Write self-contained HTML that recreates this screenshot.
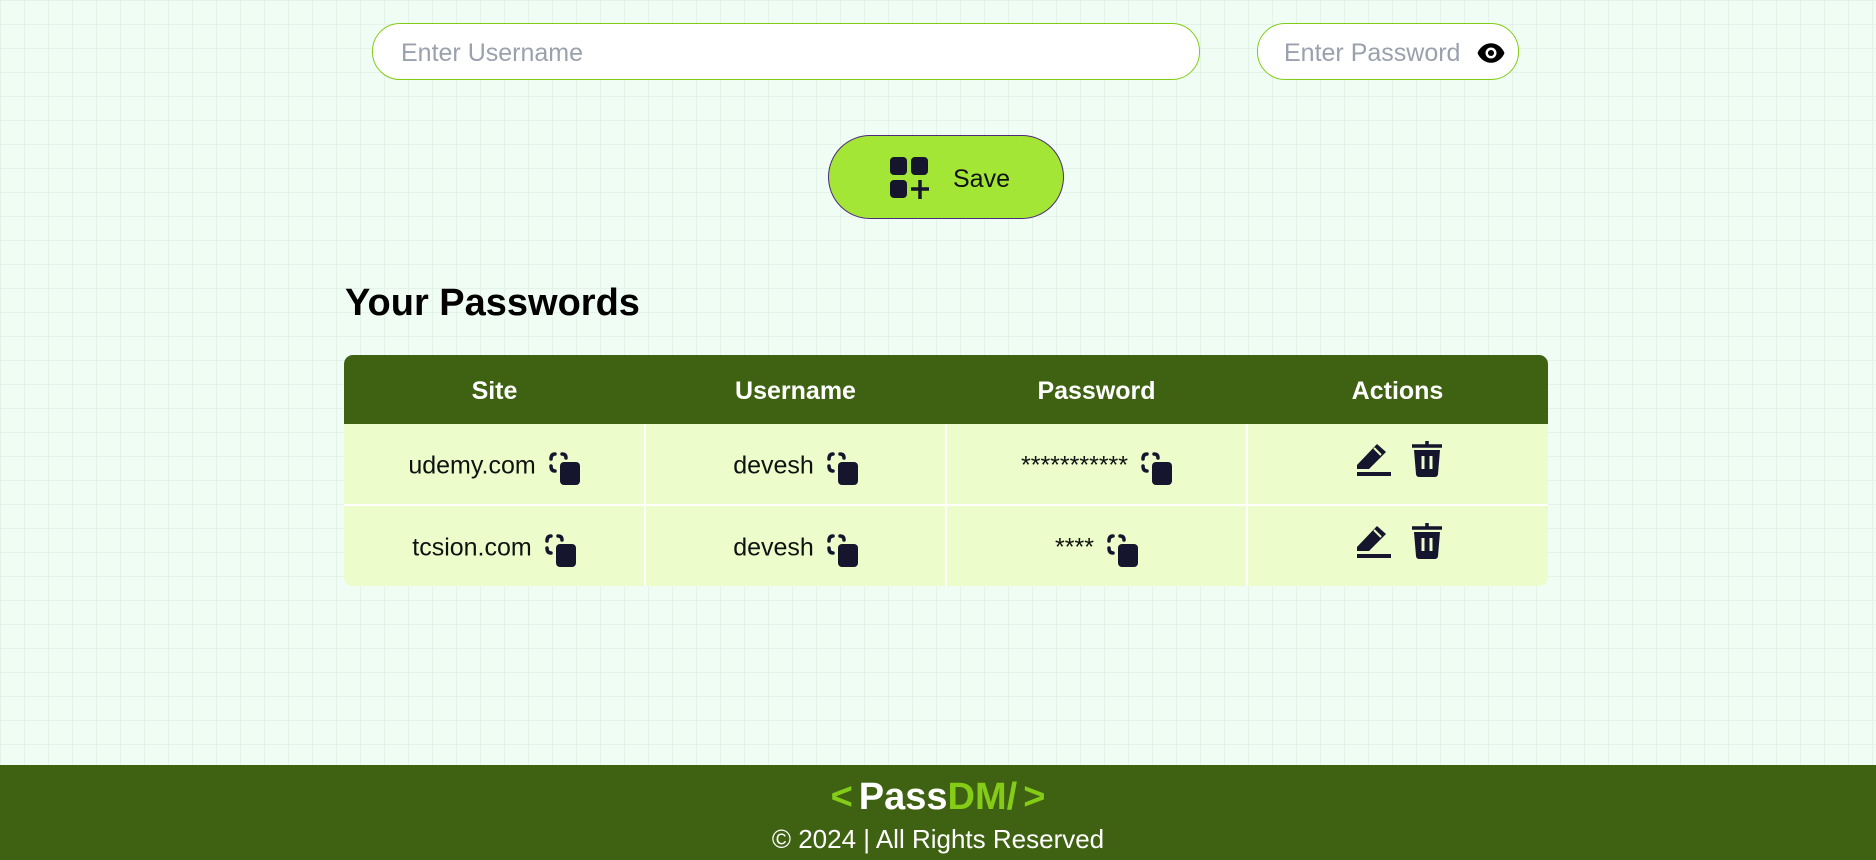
<!DOCTYPE html>
<html><head><meta charset="utf-8"><style>
*{box-sizing:border-box;margin:0;padding:0}
body{width:1876px;height:860px;overflow:hidden;position:relative;font-family:"Liberation Sans",sans-serif;
background-color:#effdf4;
background-image:linear-gradient(to right,#e3f3e8 1px,transparent 1px),linear-gradient(to bottom,#e3f3e8 1px,transparent 1px);
background-size:24px 24px}
.in{position:absolute;top:23px;height:57px;border:1px solid #84cc16;border-radius:28px;background:#fff;font-size:25px;color:#9aa1ad;padding-left:28px;line-height:59px}
.save{position:absolute;left:828px;top:135px;width:236px;height:84px;border:1px solid #4c2a7a;border-radius:42px;background:#a3e635;font-size:25px;color:#111}
h2{position:absolute;left:345px;top:282px;font-size:38px;font-weight:bold;color:#000}
table{position:absolute;left:344px;top:355px;width:1204px;border-collapse:collapse;border-radius:9px;overflow:hidden;font-size:25px}
th{background:#3f6212;color:#fff;height:69px;font-weight:bold;width:25%;padding-top:4px}
td{background:#ecfccb;height:81px;text-align:center;border:2px solid #fff;border-top:none;color:#111;padding-top:6px}
td:first-child{border-left:none}td:last-child{border-right:none}
tr:last-child td{border-bottom:none}
.cp{display:inline-block;vertical-align:middle;margin-left:12px;position:relative;top:1px}
footer{position:absolute;left:0;top:765px;width:1876px;height:95px;background:#3f6212;text-align:center;color:#fff}
</style></head><body>
<div class="in" style="left:372px;width:828px">Enter Username</div>
<div class="in" style="left:1257px;width:262px;padding-left:26px">Enter Password
<svg style="position:absolute;right:12px;top:18px" width="30" height="22" viewBox="0 0 24 18"><path d="M12 1C6 1 2 6 1 9c1 3 5 8 11 8s10-5 11-8C22 6 18 1 12 1z" fill="#000"/><circle cx="12" cy="9" r="4.5" fill="#fff"/><circle cx="12" cy="9" r="2.5" fill="#000"/></svg></div>
<div class="save">
<svg style="position:absolute;left:60px;top:20px" width="42" height="44" viewBox="0 0 42 44"><rect x="1" y="1" width="17" height="18" rx="4" fill="#15152e"/><rect x="22" y="1" width="17" height="18" rx="4" fill="#15152e"/><rect x="1" y="24" width="17" height="18" rx="4" fill="#15152e"/><path d="M31 24v19M22 33h18" stroke="#15152e" stroke-width="3.5"/></svg>
<span style="position:absolute;left:124px;top:29px">Save</span></div>
<h2>Your Passwords</h2>
<table><tr><th>Site</th><th>Username</th><th>Password</th><th>Actions</th></tr>
<tr><td>udemy.com<svg class="cp" width="32" height="34" viewBox="0 0 32 34"><g stroke="#15152e" stroke-width="3.5" fill="none" stroke-linecap="round"><path d="M3 8Q3 3 7 3M14 3Q18 3 18 7M3 15Q3 20 7 20"/></g><rect x="12" y="11" width="20" height="23" rx="4" fill="#15152e"/></svg></td>
<td>devesh<svg class="cp" width="32" height="34" viewBox="0 0 32 34"><g stroke="#15152e" stroke-width="3.5" fill="none" stroke-linecap="round"><path d="M3 8Q3 3 7 3M14 3Q18 3 18 7M3 15Q3 20 7 20"/></g><rect x="12" y="11" width="20" height="23" rx="4" fill="#15152e"/></svg></td>
<td>***********<svg class="cp" width="32" height="34" viewBox="0 0 32 34"><g stroke="#15152e" stroke-width="3.5" fill="none" stroke-linecap="round"><path d="M3 8Q3 3 7 3M14 3Q18 3 18 7M3 15Q3 20 7 20"/></g><rect x="12" y="11" width="20" height="23" rx="4" fill="#15152e"/></svg></td>
<td><svg width="40" height="34" viewBox="0 0 40 34" style="vertical-align:middle;margin-right:18px;position:relative;top:-8px"><path d="M24 2l9 8-17 17H4v-4z" fill="#15152e"/><path d="M21 6l7 7" stroke="#ecfccb" stroke-width="2"/><path d="M4 32h34" stroke="#15152e" stroke-width="4"/></svg><svg width="32" height="36" viewBox="0 0 32 36" style="vertical-align:middle;position:relative;top:-8px"><path d="M16 0v4M1 5h30" stroke="#15152e" stroke-width="3.5"/><path d="M3 9h26l-2 24a3 3 0 0 1-3 3H8a3 3 0 0 1-3-3z" fill="#15152e"/><path d="M12 15v13M20 15v13" stroke="#ecfccb" stroke-width="3"/></svg></td></tr>
<tr><td>tcsion.com<svg class="cp" width="32" height="34" viewBox="0 0 32 34"><g stroke="#15152e" stroke-width="3.5" fill="none" stroke-linecap="round"><path d="M3 8Q3 3 7 3M14 3Q18 3 18 7M3 15Q3 20 7 20"/></g><rect x="12" y="11" width="20" height="23" rx="4" fill="#15152e"/></svg></td>
<td>devesh<svg class="cp" width="32" height="34" viewBox="0 0 32 34"><g stroke="#15152e" stroke-width="3.5" fill="none" stroke-linecap="round"><path d="M3 8Q3 3 7 3M14 3Q18 3 18 7M3 15Q3 20 7 20"/></g><rect x="12" y="11" width="20" height="23" rx="4" fill="#15152e"/></svg></td>
<td>****<svg class="cp" width="32" height="34" viewBox="0 0 32 34"><g stroke="#15152e" stroke-width="3.5" fill="none" stroke-linecap="round"><path d="M3 8Q3 3 7 3M14 3Q18 3 18 7M3 15Q3 20 7 20"/></g><rect x="12" y="11" width="20" height="23" rx="4" fill="#15152e"/></svg></td>
<td><svg width="40" height="34" viewBox="0 0 40 34" style="vertical-align:middle;margin-right:18px;position:relative;top:-8px"><path d="M24 2l9 8-17 17H4v-4z" fill="#15152e"/><path d="M21 6l7 7" stroke="#ecfccb" stroke-width="2"/><path d="M4 32h34" stroke="#15152e" stroke-width="4"/></svg><svg width="32" height="36" viewBox="0 0 32 36" style="vertical-align:middle;position:relative;top:-8px"><path d="M16 0v4M1 5h30" stroke="#15152e" stroke-width="3.5"/><path d="M3 9h26l-2 24a3 3 0 0 1-3 3H8a3 3 0 0 1-3-3z" fill="#15152e"/><path d="M12 15v13M20 15v13" stroke="#ecfccb" stroke-width="3"/></svg></td></tr>
</table>
<footer><div style="font-size:38px;font-weight:bold;margin-top:10px;line-height:44px"><span style="color:#84cc16;margin-right:6px">&lt;</span>Pass<span style="color:#84cc16">DM/<span style="margin-left:6px">&gt;</span></span></div>
<div style="font-size:26px;line-height:34px;margin-top:3px">© 2024 | All Rights Reserved</div></footer>
</body></html>
